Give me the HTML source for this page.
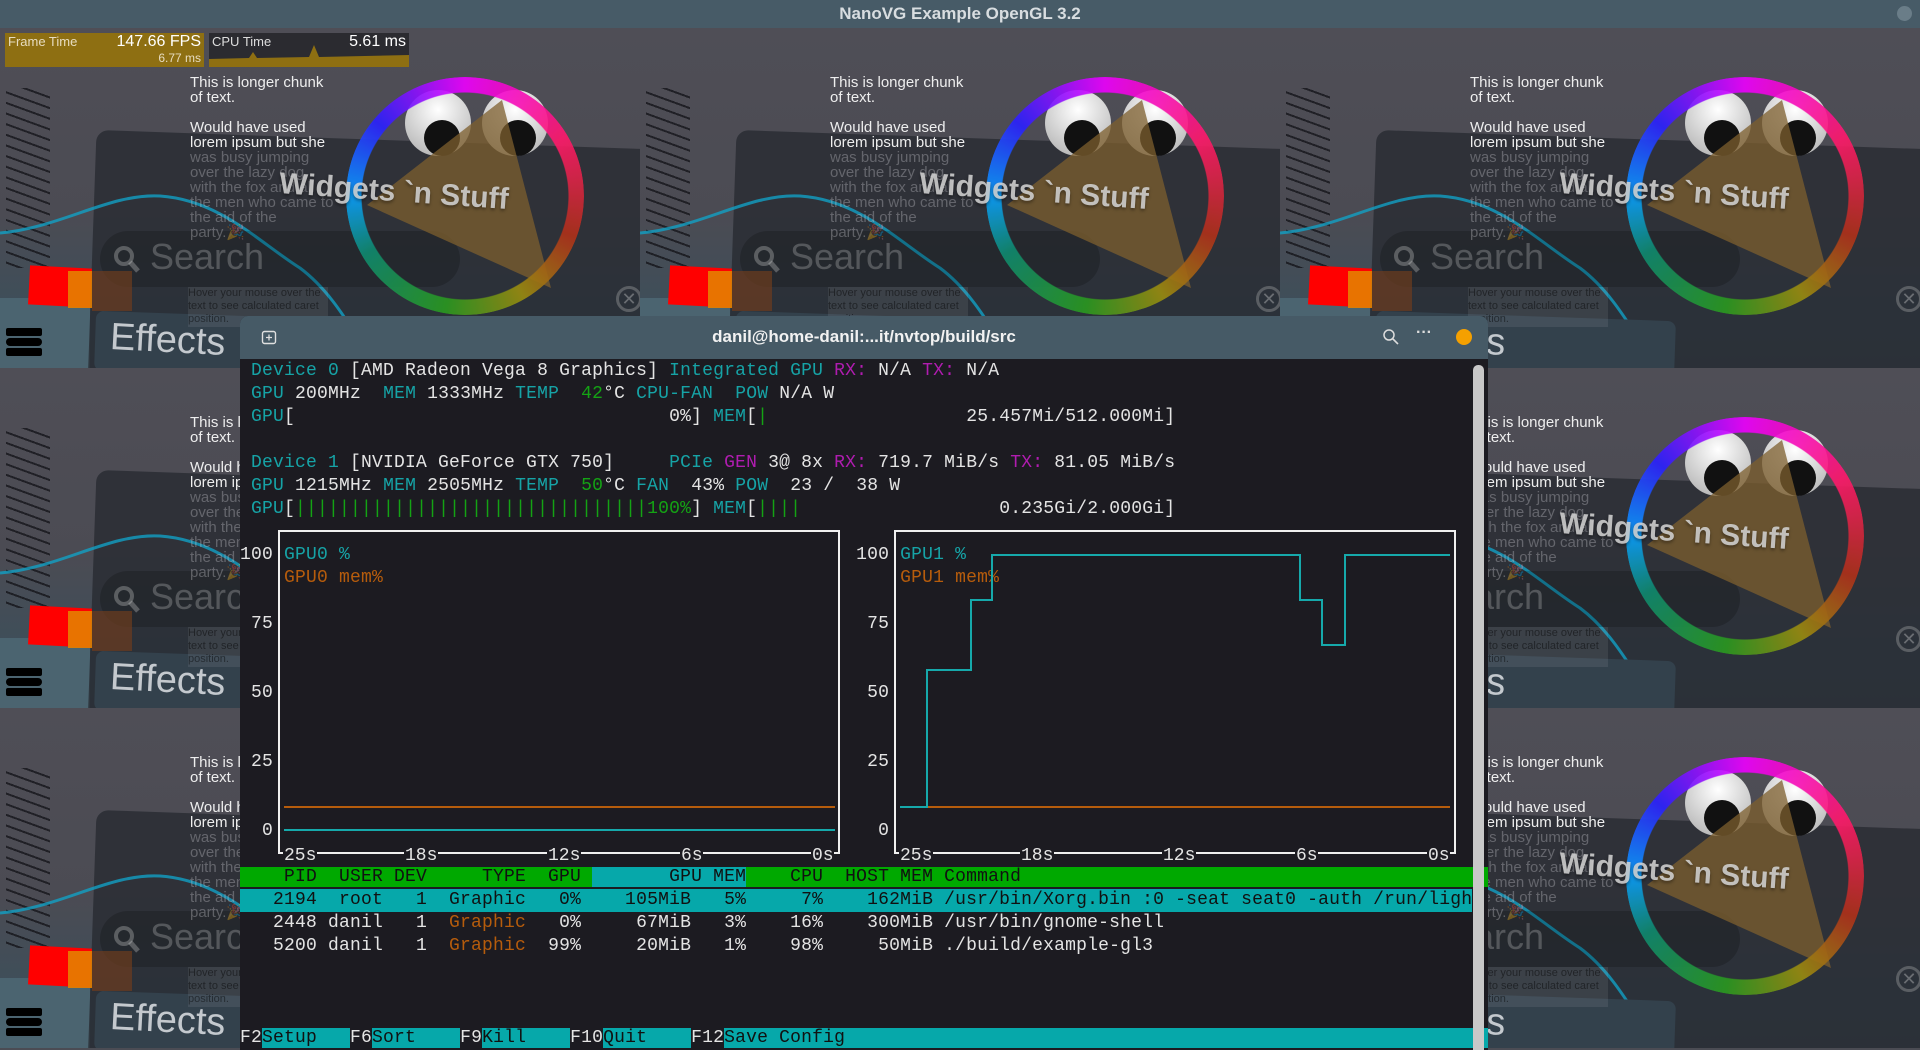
<!DOCTYPE html>
<html><head><meta charset="utf-8">
<style>
*{margin:0;padding:0;box-sizing:border-box}
html,body{width:1920px;height:1050px;overflow:hidden;background:#4b4c54;font-family:"Liberation Sans",sans-serif}
#top{position:absolute;left:0;top:0;width:1920px;height:28px;background:#475b67;color:#d8dde0;font-size:17px;font-weight:bold;text-align:center;line-height:28px}
#top .dot{position:absolute;right:8px;top:6px;width:15px;height:15px;border-radius:50%;background:#6a7d88}
.tile{position:absolute;width:640px;height:340px;overflow:hidden;background:linear-gradient(180deg,#4f4e56 0%,#4b4b53 55%,#3f4e59 80%,#3c4a55 100%)}
.tile .teal{position:absolute;left:0;top:270px;width:90px;height:70px;background:#4b6470}
.hatch{position:absolute;left:6px;top:60px;width:44px;height:180px;background:repeating-linear-gradient(200deg,transparent 0 8px,#15151a 8px 10px);opacity:.8}
.panel{position:absolute;left:92px;top:112px;width:580px;height:250px;background:rgba(38,40,47,.75);border-radius:12px;transform:rotate(2deg)}
.search{position:absolute;left:100px;top:203px;width:360px;height:56px;border-radius:28px;background:rgba(0,0,0,.18)}
.stext{position:absolute;left:150px;top:208px;font-size:36px;color:rgba(255,255,255,.22)}
.effbtn{position:absolute;left:95px;top:288px;width:300px;height:60px;border-radius:8px;background:#33414c;transform:rotate(2deg)}
.eff{position:absolute;left:110px;top:291px;font-size:38px;color:#c4c9ce;transform:rotate(3deg)}
.red{position:absolute;left:29px;top:239px;width:62px;height:39px;background:#f00;transform:rotate(3deg)}
.red2{position:absolute;left:68px;top:243px;width:24px;height:37px;background:#e58000;opacity:.9}
.red3{position:absolute;left:92px;top:243px;width:40px;height:40px;background:rgba(110,60,30,.7)}
.txt{position:absolute;left:190px;top:47px;font-size:15px;line-height:15px;color:#eee;width:170px}
.txt .d{color:rgba(200,200,205,.35)}
.wheel{position:absolute;left:346px;top:49px;width:238px;height:238px;border-radius:50%;background:conic-gradient(from 0deg,#e0f 0deg,#ff1a6a 60deg,#b0301a 110deg,#9a8c10 150deg,#2a9a20 190deg,#108a70 240deg,#0aa0ff 270deg,#2a20ff 310deg,#e0f 360deg);-webkit-mask:radial-gradient(circle,transparent 103px,#000 104px);mask:radial-gradient(circle,transparent 103px,#000 104px);opacity:.9}
.eye{position:absolute;width:66px;height:66px;border-radius:50%;background:radial-gradient(circle at 50% 30%,#fff,#aaa)}
.pup{position:absolute;width:36px;height:36px;border-radius:50%;background:#111}
.wid{position:absolute;left:279px;top:147px;font-size:30px;font-weight:bold;color:rgba(215,215,215,.85);transform:rotate(4deg);white-space:nowrap;text-shadow:0 2px 3px rgba(0,0,0,.4)}
.hov{position:absolute;left:188px;top:259px;width:140px;height:40px;background:rgba(255,255,255,.08);font-size:11px;color:rgba(0,0,0,.45);line-height:13px}
.menu{position:absolute;left:6px;width:36px;height:8px;background:#000;border-radius:2px}
#term{position:absolute;left:240px;top:316px;width:1248px;height:734px;background:#1c1b21;border-radius:8px 8px 0 0;overflow:hidden}
#tbar{position:absolute;left:0;top:0;width:1248px;height:43px;background:#465a66}
#tbar .t{position:absolute;left:0;width:1248px;text-align:center;top:11px;font-size:17px;font-weight:bold;color:#f2f2f2}
pre{position:absolute;left:0;top:44px;font-family:"Liberation Mono","DejaVu Sans Mono",monospace;font-size:18px;letter-spacing:.2px;line-height:23px;color:#e4e4e4;white-space:pre}
.c{color:#16a3a6}.m{color:#b01cb0}.g{color:#14a314}.o{color:#b65c0c}
.hg{background:#00a900;color:#111}.hc{background:#06a8aa;color:#111}
.row1{background:#06a8aa;color:#111;display:inline-block;width:1232px}
.fk{background:#06a8aa;color:#111}
#scroll{position:absolute;left:1233px;top:49px;width:11px;height:690px;background:#c8c8c8;border-radius:5px}
#fps{position:absolute;left:5px;top:33px;width:199px;height:34px;background:#8e6f12;color:#e7dcc0;font-size:13px}
#cpu{position:absolute;left:209px;top:33px;width:200px;height:34px;background:#2b2b30;color:#ddd;font-size:13px}
</style></head><body>
<div id="bg"></div>
<div id="top">NanoVG Example OpenGL 3.2<div class="dot"></div></div>

<div id="fps"><span style="position:absolute;left:3px;top:1px">Frame Time</span><span style="position:absolute;right:3px;top:0;font-size:16px;color:#fff">147.66 FPS</span><span style="position:absolute;right:3px;top:18px;font-size:12px">6.77 ms</span></div>
<div id="cpu"><span style="position:absolute;left:3px;top:1px">CPU Time</span><span style="position:absolute;right:3px;top:0;font-size:16px;color:#fff">5.61 ms</span>
<svg style="position:absolute;left:0;top:0" width="200" height="34"><path d="M0 26 L40 25 L44 19 L48 25 L100 24 L105 12 L110 24 L200 22 L200 34 L0 34Z" fill="#8e6f12"/></svg></div>

<div id="term">
<div id="tbar"><div class="t">danil@home-danil:...it/nvtop/build/src</div>
<svg style="position:absolute;left:21px;top:14px" width="16" height="16"><rect x="1.5" y="1.5" width="13" height="12" rx="2" fill="none" stroke="#e0e0e0" stroke-width="1.4"/><path d="M8 4.5v6M5 7.5h6" stroke="#e0e0e0" stroke-width="1.3"/></svg>
<svg style="position:absolute;left:1142px;top:12px" width="18" height="18"><circle cx="7" cy="7" r="5" fill="none" stroke="#ddd" stroke-width="1.5"/><path d="M11 11l5 5" stroke="#ddd" stroke-width="1.6"/></svg>
<div style="position:absolute;left:1176px;top:8px;color:#ddd;font-size:16px;font-weight:bold">···</div>
<div style="position:absolute;left:1216px;top:13px;width:16px;height:16px;border-radius:50%;background:#f5a000"></div>
</div>
<pre> <span class="c">Device 0</span> [AMD Radeon Vega 8 Graphics] <span class="c">Integrated GPU</span> <span class="m">RX:</span> N/A <span class="m">TX:</span> N/A
 <span class="c">GPU</span> 200MHz  <span class="c">MEM</span> 1333MHz <span class="c">TEMP</span>  <span class="g">42</span>°C <span class="c">CPU-FAN</span>  <span class="c">POW</span> N/A W
 <span class="c">GPU</span>[                                  0%] <span class="c">MEM</span>[<span class="g">|</span>                  25.457Mi/512.000Mi]

 <span class="c">Device 1</span> [NVIDIA GeForce GTX 750]     <span class="c">PCIe</span> <span class="m">GEN</span> 3@ 8x <span class="m">RX:</span> 719.7 MiB/s <span class="m">TX:</span> 81.05 MiB/s
 <span class="c">GPU</span> 1215MHz <span class="c">MEM</span> 2505MHz <span class="c">TEMP</span>  <span class="g">50</span>°C <span class="c">FAN</span>  43% <span class="c">POW</span>  23 /  38 W
 <span class="c">GPU</span>[<span class="g">||||||||||||||||||||||||||||||||100%</span>] <span class="c">MEM</span>[<span class="g">||||</span>                  0.235Gi/2.000Gi]

100 <span class="c">GPU0 %</span>                                              100 <span class="c">GPU1 %</span>
    <span class="o">GPU0 mem%</span>                                               <span class="o">GPU1 mem%</span>

 75                                                      75


 50                                                      50


 25                                                      25


  0                                                       0

<span class="hg">    PID  USER DEV     TYPE  GPU </span><span class="hc">       GPU MEM</span><span class="hg">    CPU  HOST MEM Command                                                 </span>
<span class="row1">   2194  root   1  Graphic   0%    105MiB   5%     7%    162MiB /usr/bin/Xorg.bin :0 -seat seat0 -auth /run/ligh</span>
   2448 danil   1  <span class="o">Graphic</span>   0%     67MiB   3%    16%    300MiB /usr/bin/gnome-shell
   5200 danil   1  <span class="o">Graphic</span>  99%     20MiB   1%    98%     50MiB ./build/example-gl3



F2<span class="fk">Setup   </span>F6<span class="fk">Sort    </span>F9<span class="fk">Kill    </span>F10<span class="fk">Quit    </span>F12<span class="fk">Save Config                                                                                </span></pre>
<svg style="position:absolute;left:0;top:0" width="1248" height="734">
<g transform="translate(-240,-316)" fill="none">
<rect x="279" y="531" width="560" height="322" stroke="#f0f0f0" stroke-width="2"/>
<rect x="895" y="531" width="560" height="322" stroke="#f0f0f0" stroke-width="2"/>
<path d="M284 807H835" stroke="#b65c0c" stroke-width="2"/>
<path d="M284 830H835" stroke="#16a9ab" stroke-width="2"/>
<path d="M900 807H1450" stroke="#b65c0c" stroke-width="2"/>
<path d="M900 807H927V670H971V600H992V555H1300V600H1322V645H1345V555H1450" stroke="#16a9ab" stroke-width="2"/>
</g>
<g font-family="Liberation Mono,monospace" font-size="18" fill="#e4e4e4">
<rect x="43" y="528" width="34" height="20" fill="#1c1b21"/><text x="44" y="544">25s</text>
<rect x="164" y="528" width="34" height="20" fill="#1c1b21"/><text x="165" y="544">18s</text>
<rect x="307" y="528" width="34" height="20" fill="#1c1b21"/><text x="308" y="544">12s</text>
<rect x="440" y="528" width="23" height="20" fill="#1c1b21"/><text x="441" y="544">6s</text>
<rect x="571" y="528" width="23" height="20" fill="#1c1b21"/><text x="572" y="544">0s</text>
<rect x="659" y="528" width="34" height="20" fill="#1c1b21"/><text x="660" y="544">25s</text>
<rect x="780" y="528" width="34" height="20" fill="#1c1b21"/><text x="781" y="544">18s</text>
<rect x="922" y="528" width="34" height="20" fill="#1c1b21"/><text x="923" y="544">12s</text>
<rect x="1055" y="528" width="23" height="20" fill="#1c1b21"/><text x="1056" y="544">6s</text>
<rect x="1187" y="528" width="23" height="20" fill="#1c1b21"/><text x="1188" y="544">0s</text>
</g>
</svg>
<div id="scroll"></div>
</div>

<template id="tpl">
<div class="teal"></div>
<div class="hatch"></div>
<div class="panel"></div>
<svg style="position:absolute;left:0;top:0" width="640" height="340"><path d="M0 205 C60 200,110 165,160 168 C220 172,260 215,300 240 C340 270,360 320,380 340" stroke="#12a0c4" stroke-width="3" fill="none" opacity=".8"/></svg>
<div class="search"></div>
<svg style="position:absolute;left:112px;top:216px" width="30" height="32"><circle cx="12" cy="12" r="8" fill="none" stroke="rgba(255,255,255,.25)" stroke-width="4"/><path d="M18 18l8 9" stroke="rgba(255,255,255,.25)" stroke-width="5"/></svg>
<div class="stext">Search</div>
<div class="effbtn"></div>
<div class="eff">Effects</div>
<div class="red"></div><div class="red2"></div><div class="red3"></div>
<div class="menu" style="top:300px"></div><div class="menu" style="top:310px;border-radius:5px"></div><div class="menu" style="top:320px"></div>
<div class="eye" style="left:405px;top:62px"></div><div class="eye" style="left:482px;top:62px"></div>
<div class="pup" style="left:424px;top:92px"></div><div class="pup" style="left:500px;top:92px"></div>
<svg style="position:absolute;left:0;top:0" width="640" height="340"><path d="M502 72 L367 177 L551 260Z" fill="rgba(125,95,45,.75)"/></svg>
<div class="wheel"></div>
<div class="txt">This is longer chunk<br>of text.<br><br>Would have used<br>lorem ipsum but she<br><span class="d">was busy jumping<br>over the lazy dog<br>with the fox and all<br>the men who came to<br>the aid of the<br>party.🎉</span></div>
<div class="hov">Hover your mouse over the text to see calculated caret position.</div>
<div class="wid">Widgets `n Stuff</div>
<div style="position:absolute;left:616px;top:258px;width:26px;height:26px;border-radius:50%;border:3px solid rgba(200,200,200,.3);color:rgba(200,200,200,.4);font-size:18px;text-align:center;line-height:20px">✕</div>
</template>
<script>
var t=document.getElementById('tpl'),bg=document.getElementById('bg');
for(var r=0;r<3;r++)for(var c=0;c<3;c++){var d=document.createElement('div');d.className='tile';d.style.left=(c*640)+'px';d.style.top=(28+r*340)+'px';d.innerHTML=t.innerHTML;bg.appendChild(d);}
</script>
</body></html>
